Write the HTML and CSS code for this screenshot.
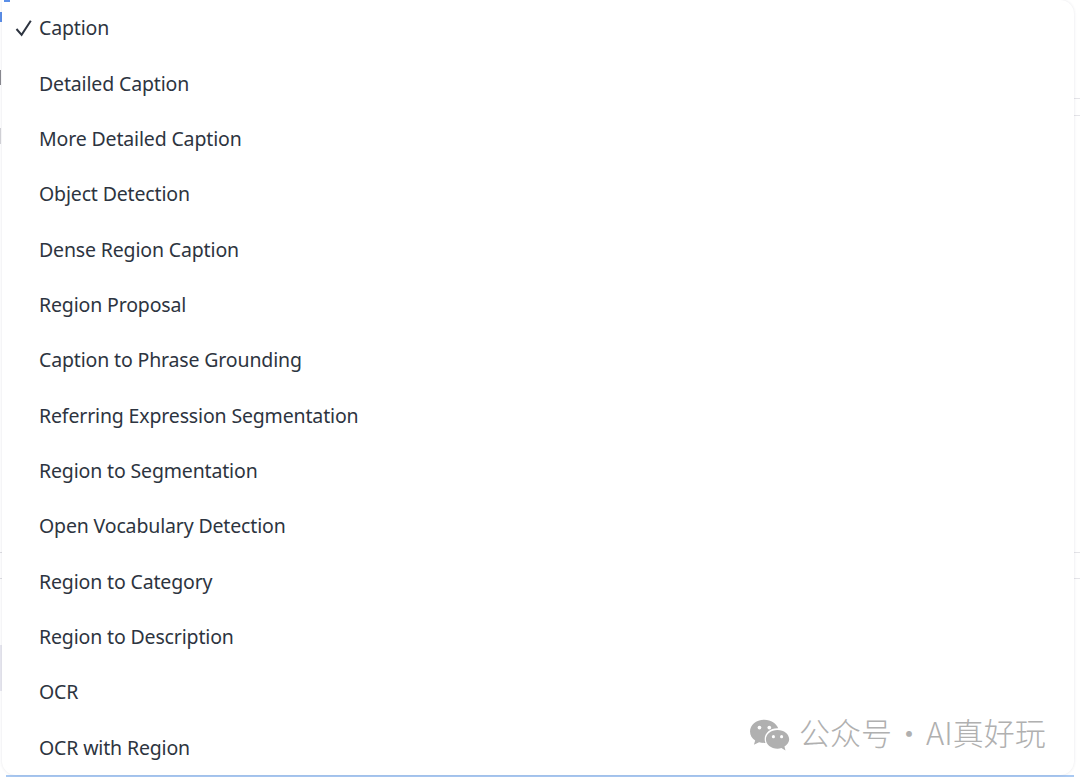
FILE: index.html
```html
<!DOCTYPE html>
<html lang="en">
<head>
  <meta charset="UTF-8">
  <title>Task menu</title>
  <link rel="stylesheet" href="styles.css">
</head>
<body>
<div class="page">
  <ul class="menu">
    <li class="item">
      <svg class="check" viewBox="0 0 18 18"><path d="M1.500 10 L6.600 15.800 L15.800 1.800" /></svg>
      <span>Caption</span>
    </li>
    <li class="item"><span>Detailed Caption</span></li>
    <li class="item"><span>More Detailed Caption</span></li>
    <li class="item"><span>Object Detection</span></li>
    <li class="item"><span>Dense Region Caption</span></li>
    <li class="item"><span>Region Proposal</span></li>
    <li class="item"><span>Caption to Phrase Grounding</span></li>
    <li class="item"><span>Referring Expression Segmentation</span></li>
    <li class="item"><span>Region to Segmentation</span></li>
    <li class="item"><span>Open Vocabulary Detection</span></li>
    <li class="item"><span>Region to Category</span></li>
    <li class="item"><span>Region to Description</span></li>
    <li class="item"><span>OCR</span></li>
    <li class="item"><span>OCR with Region</span></li>
  </ul>

  <!-- bits of the page behind the menu -->
  <div class="peek blue-bar"></div>
  <div class="peek blue-top"></div>
  <div class="peek blue-dash"></div>
  <div class="peek dark-tick"></div>
  <div class="peek grey-tick"></div>
  <div class="peek lav-left"></div>
  <div class="peek line-left line-a"></div>
  <div class="peek line-left line-b"></div>
  <div class="peek line-right line-c"></div>
  <div class="peek line-right line-d"></div>
  <div class="peek line-right line-a"></div>
  <div class="peek line-right line-b"></div>

  <div class="watermark">
    <svg class="wechat" viewBox="0 0 40 32">
      <path d="M15 1 C7 1 1 6.200 1 12.500 C1 16.200 3 19.200 6 21.300 L4.800 25.500 L9.800 23 C11.500 23.500 13 23.800 15 23.800 L16 23.800 C15.500 22.500 15.300 21.200 15.300 20 C15.300 14 20.800 9.500 27.600 9.500 L28.500 9.500 C26.800 4.500 21.500 1 15 1 Z" />
      <path d="M27.800 11 C21.500 11 16.500 15 16.500 20.200 C16.500 25.400 21.500 29.400 27.800 29.400 C29.200 29.400 30.400 29.200 31.600 28.800 L35.600 31 L34.600 27.300 C37.400 25.500 39.200 23 39.200 20.200 C39.200 15 34.200 11 27.800 11 Z" />
      <circle class="eye" cx="10.200" cy="8.800" r="1.800" />
      <circle class="eye" cx="19.800" cy="8.800" r="1.800" />
      <circle class="eye" cx="23.800" cy="17.600" r="1.500" />
      <circle class="eye" cx="31.800" cy="17.600" r="1.500" />
    </svg>
    <span class="mark-text">公众号<span class="dot">·</span>AI真好玩</span>
  </div>
</div>
</body>
</html>
```

FILE: styles.css
```css
* {
    margin: 0;
    padding: 0;
    box-sizing: border-box;
}

html, body {
    height: 100%;
    background-color: #ffffff;
    overflow: hidden;
}

.page {
    position: relative;
    width: 1080px;
    height: 777px;
    padding-right: 6px;
    padding-left: 2px;
    background-color: #ffffff;
    overflow: hidden;
}

.menu {
    position: relative;
    z-index: 1;
    list-style: none;
    height: 775px;
    border-radius: 0 14px 14px 14px;
    background-color: #ffffff;
    box-shadow: 0 0 3px rgba(40, 40, 70, 0.12);
    font-family: "Noto Sans", sans-serif;
    font-size: 19.5px;
    letter-spacing: -0.15px;
    color: #2d3440;
}

.item {
    display: flex;
    align-items: center;
    height: 55.36px;
    padding-left: 37px;
    position: relative;
}

.check {
    position: absolute;
    left: 13px;
    top: 19px;
    width: 18px;
    height: 18px;
    fill: none;
    stroke: #2d3440;
    stroke-width: 2;
}

.peek {
    position: absolute;
}

.blue-bar {
    left: 6px;
    right: 6px;
    bottom: 0;
    height: 2px;
    background-color: #a9c9f2;
}

.blue-top {
    left: 4px;
    top: 0;
    width: 6px;
    height: 2px;
    background-color: #5b8fe8;
    z-index: 2;
}

.blue-dash {
    left: 0;
    top: 12px;
    width: 2px;
    height: 10px;
    background-color: #5b8fe8;
}

.dark-tick {
    left: 0;
    top: 70px;
    width: 1px;
    height: 15px;
    background-color: #8a8a90;
}

.grey-tick {
    left: 0;
    top: 128px;
    width: 1px;
    height: 16px;
    background-color: #d4d4d8;
}

.lav-left {
    left: 0;
    top: 645px;
    width: 2px;
    height: 46px;
    background-color: #e8e8f0;
}

.line-left {
    left: 0;
    width: 2px;
    height: 1px;
    background-color: #dedee2;
}

.line-right {
    right: 0;
    width: 6px;
    height: 1px;
    background-color: #e4e4e8;
}

.line-a {
    top: 552px;
}

.line-b {
    top: 578px;
}

.line-c {
    top: 98px;
}

.line-d {
    top: 115px;
}

.watermark {
    position: absolute;
    z-index: 2;
    left: 749px;
    top: 715px;
    display: flex;
    align-items: center;
    gap: 9px;
    font-family: "Noto Sans CJK SC", sans-serif;
    font-size: 31px;
    font-weight: 300;
    line-height: 34px;
    color: #b0b0b0;
    white-space: nowrap;
}

.mark-text {
    margin-bottom: 5px;
}

.dot {
    display: inline-block;
    width: 34px;
    text-align: center;
}

.wechat {
    width: 41px;
    height: 34px;
    fill: #b0b0b0;
}

.wechat .eye {
    fill: #ffffff;
}
```
